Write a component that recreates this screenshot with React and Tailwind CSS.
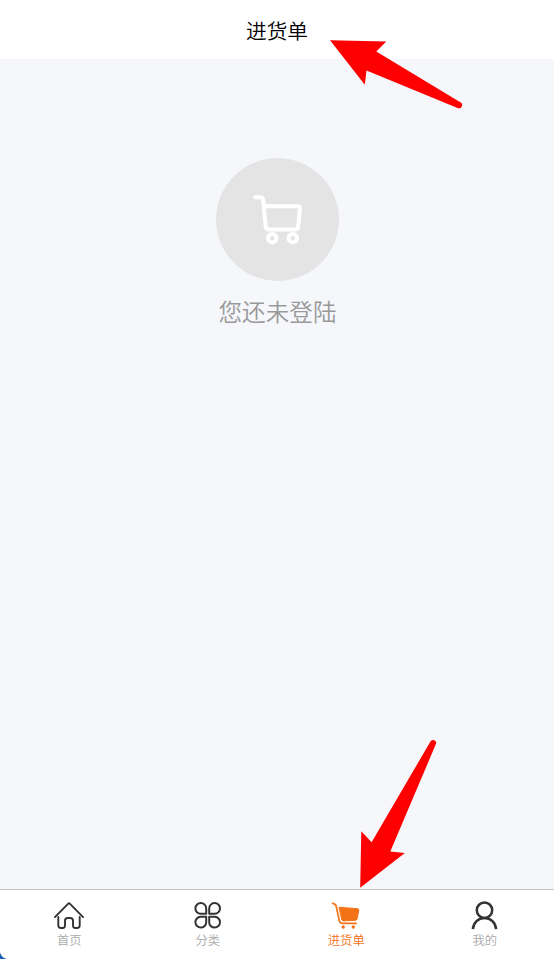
import React from 'react';
import clsx from 'clsx';

const HomeIcon = () => (
  <svg viewBox="0 0 32 30" className="w-8 h-[30px]" fill="none" stroke="#333" strokeWidth="1.9" strokeLinecap="round" strokeLinejoin="round">
    <path d="M1.9 17.1 15 3.800q1-1 2 0L30.100 17.100" />
    <path d="M5.300 17v8.200q0 2.800 2.800 2.800H9.600q2.400 0 2.400-2.800V20.800q0-2.800 2.800-2.800h2.400q2.800 0 2.800 2.800v4.400q0 2.800 2.400 2.800h1.500q2.800 0 2.800-2.800V17" />
  </svg>
);

const CategoryIcon = () => (
  <svg viewBox="0 0 32 30" className="w-8 h-[30px]" fill="none" stroke="#333" strokeWidth="2" strokeLinejoin="round">
    <path d="M14.200 13.800H8.600a5.400 5.400 0 1 1 5.600-5.400z" />
    <path d="M17.200 13.800h5.600a5.400 5.400 0 1 0-5.600-5.400z" />
    <path d="M14.200 16.800H8.600a5.400 5.400 0 1 0 5.600 5.400z" />
    <path d="M17.200 16.800h5.600a5.400 5.400 0 1 1-5.600 5.400z" />
  </svg>
);

const OrderIcon = () => (
  <svg viewBox="0 0 32 30" className="w-8 h-[30px]" fill="none" stroke="#f47216" strokeWidth="1.7" strokeLinecap="round" strokeLinejoin="round">
    <path d="M2.600 3.300q3 .3 3.700 3.200L9.200 20.400q.6 3 3.300 3h13.600" />
    <path d="M9.300 7.300 27.600 8.700q1.400.1 1.200 1.500l-1.600 8.500q-.3 1.500-1.700 1.600l-12 .6q-1.500 0-1.800-1.500z" fill="#f47216" strokeWidth="1" />
    <circle cx="13.200" cy="27" r="1.700" fill="#f47216" stroke="none" />
    <circle cx="23.300" cy="27" r="1.700" fill="#f47216" stroke="none" />
  </svg>
);

const UserIcon = () => (
  <svg viewBox="0 0 32 30" className="w-8 h-[30px]" fill="none" stroke="#333" strokeWidth="2.5">
    <circle cx="15.500" cy="10.200" r="7.700" />
    <path d="M3.900 29.200C4.400 22.500 9.300 18 15.500 18s11.100 4.500 11.600 11.200" />
  </svg>
);

const tabs = [
  { label: '首页', icon: HomeIcon },
  { label: '分类', icon: CategoryIcon },
  { label: '进货单', icon: OrderIcon, active: true },
  { label: '我的', icon: UserIcon },
];

const App = () => {
  return (
    <div className="relative flex flex-col h-[959px] w-full overflow-hidden bg-[#f5f7fb] font-['Noto_Sans_CJK_SC',sans-serif]">
      <header className="h-[59px] shrink-0 bg-white flex items-center justify-center pt-px">
        <h1 className="text-[20.7px] leading-[30px] font-[350] text-black">进货单</h1>
      </header>

      <main className="flex-1 flex flex-col items-center pt-[99px]">
        <div className="w-[123px] h-[123px] rounded-full bg-[#e4e4e4] flex items-center justify-center">
          <svg viewBox="0 0 52 52" className="w-[52px] h-[52px]" fill="none" stroke="#fff" strokeWidth="4" strokeLinecap="round" strokeLinejoin="round">
            <path d="M4.200 3.200H9.500q2.300 0 2.600 2.300L14.700 32.200q.3 3.200 3.200 3.200h26.600q2.300 0 2.500-2.300l2-18.700q.2-2.200-2.200-2.200H13" />
            <circle cx="21.200" cy="44.200" r="4.200" />
            <circle cx="41.800" cy="44.200" r="4.200" />
          </svg>
        </div>
        <p className="mt-3 pl-px text-[23.6px] leading-[36px] font-[350] text-[#999]">您还未登陆</p>
      </main>

      <nav className="h-[70px] shrink-0 bg-white border-t border-[#c4c6ca] flex">
        {tabs.map(({ label, icon: Icon, active }) => (
          <div key={label} className="flex-1 flex flex-col items-center pt-[10px]">
            <Icon />
            <span className={clsx('text-[12.3px] leading-[18px] mt-px font-[350]', active ? 'text-[#f47216]' : 'text-[#aaa]')}>{label}</span>
          </div>
        ))}
      </nav>

      {/* arrows pointing at the page title and the active tab */}
      <svg viewBox="0 0 554 959" className="absolute inset-0 w-[554px] h-[959px] pointer-events-none" fill="#f00">
        <path d="M330 40.200 386.300 41.500 376.300 51.500 460.300 102.200A3 3 0 0 1 457.500 107.900L366.500 70.600 364.800 84.800Z" />
        <path d="M360.200 887.800 361.300 831.200 371.600 842.200 430.300 741.800A3 3 0 0 1 435.800 744.300L390.300 851.600 404.800 853Z" />
        <path d="M0 952.500Q1.500 957.500 6.500 959H0Z" fill="#1a5fb4" />
      </svg>
    </div>
  );
};

export default App;
